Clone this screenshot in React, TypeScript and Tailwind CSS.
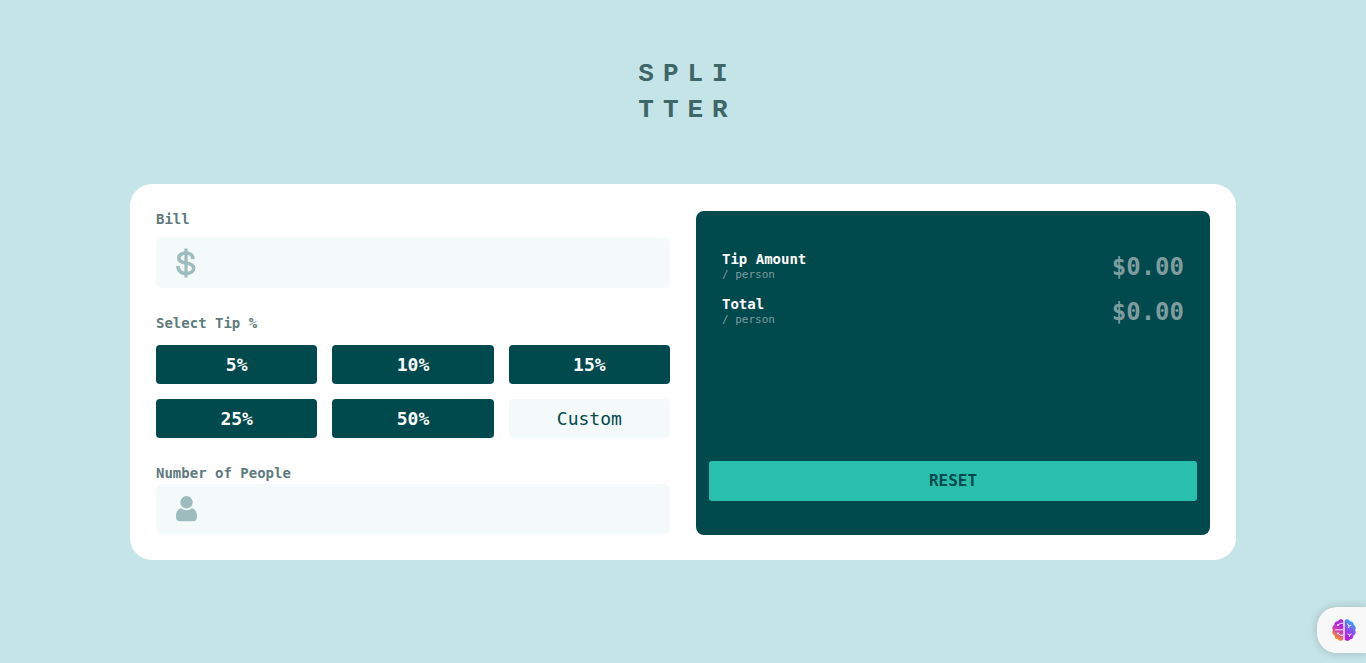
import { useState } from "react";

const TIPS = [5, 10, 15, 25, 50];

function LogoRow({ word }: { word: string }) {
  return (
    <span className="flex gap-[9px]">
      {word.split("").map((letter, i) => (
        <span key={i}>{letter}</span>
      ))}
    </span>
  );
}

function DollarIcon() {
  return (
    <svg width="20" height="30" viewBox="0 0 20 30" fill="none" stroke="#9ebbbd" aria-hidden="true">
      <path d="M10 .5v29" strokeWidth="3.2" />
      <path
        d="M17 11.200C17 7 14.200 5 10 5 5.600 5 2.800 7.200 2.800 10c0 3.200 2.900 4.400 7.200 5 4.700.7 7.700 2 7.700 5.300 0 3.200-3.100 5.200-7.700 5.200-4.700 0-8-2.500-8-7.500"
        strokeWidth="3.600"
      />
    </svg>
  );
}

function PersonIcon() {
  return (
    <svg width="21" height="26" viewBox="0 0 21 26" fill="#9ebbbd" aria-hidden="true">
      <circle cx="10.500" cy="6.300" r="6.200" />
      <path d="M5.200 12.300C1.800 12.900 0 16 0 20.500 0 24 1.500 25.300 4.500 25.300h12c3 0 4.500-1.300 4.500-4.800 0-4.500-1.800-7.600-5.200-8.200-1.500 1.300-3.300 2-5.300 2s-3.800-.7-5.300-2z" />
    </svg>
  );
}

function BrainIcon() {
  return (
    <svg width="24" height="22" viewBox="0 0 24 22" fill="none" aria-hidden="true">
      <defs>
        <linearGradient id="brain-left" x1="2" y1="17" x2="9" y2="7" gradientUnits="userSpaceOnUse">
          <stop stopColor="#f58a32" />
          <stop offset=".55" stopColor="#cf3fb8" />
          <stop offset="1" stopColor="#a929db" />
        </linearGradient>
        <linearGradient id="brain-right" x1="13" y1="17" x2="22" y2="4" gradientUnits="userSpaceOnUse">
          <stop stopColor="#b51be0" />
          <stop offset=".45" stopColor="#8a50ed" />
          <stop offset="1" stopColor="#31a8fa" />
        </linearGradient>
      </defs>
      <path
        fill="url(#brain-left)"
        d="M11.300 1.500v19C9.900 22.400 7 22.300 6 20.200c-2.200.2-3.700-1.400-3.200-3.500C.5 15.800-.4 13.300.9 11.300-.4 9.200.3 6.800 2.300 5.900 2.100 3.500 3.800 2 5.900 2.200 7-.2 10-.5 11.300 1.500z"
      />
      <path
        fill="url(#brain-right)"
        d="M12.700 1.500v19c1.400 1.900 4.300 1.800 5.300-.3 2.200.2 3.700-1.400 3.200-3.500 2.300-.9 3.200-3.400 1.900-5.400 1.300-2.100.6-4.500-1.400-5.400.2-2.400-1.500-3.900-3.600-3.700C17-.2 14-.5 12.700 1.500z"
      />
      <g stroke="#f6e9fc" strokeWidth="1">
        <path d="M11.300 4.200H8.800L6 6M3.300 10.800h8M11.300 16.200H8.500L6 14.300" />
        <path d="M15.500 4.500l1.300 2.700 2.500-1M16.800 7.200v2M15.500 15l2 .8 2-1M17.500 15.800v2" />
      </g>
      <g fill="#f6e9fc">
        <circle cx="6" cy="6" r="1" />
        <circle cx="6" cy="14.500" r="1" />
      </g>
    </svg>
  );
}

function ResultRow({ label, value }: { label: string; value: number }) {
  return (
    <div className="flex items-center justify-between px-[13px]">
      <div className="leading-4">
        <p className="text-sm leading-4 font-bold text-white">{label}</p>
        <p className="text-[11px] leading-4 text-[#7f9c9f]">/ person</p>
      </div>
      <output className="text-2xl leading-8 font-bold text-[#7f9c9f]">${value.toFixed(2)}</output>
    </div>
  );
}

export default function App() {
  const [bill, setBill] = useState("");
  const [people, setPeople] = useState("");
  const [custom, setCustom] = useState("");
  const [tip, setTip] = useState(0);

  const count = Number(people);
  const amount = Number(bill) || 0;
  const rate = (Number(custom) || tip) / 100;
  const tipEach = count > 0 ? (amount * rate) / count : 0;
  const totalEach = count > 0 ? (amount * (1 + rate)) / count : 0;

  const reset = () => {
    setBill("");
    setPeople("");
    setCustom("");
    setTip(0);
  };

  return (
    <div className="min-h-screen bg-[#c5e4e7] px-4 pt-14 pb-10 font-['DejaVu_Sans_Mono','Liberation_Mono',monospace]">
      <h1
        aria-label="Splitter"
        className="flex flex-col items-center font-['Liberation_Mono',monospace] text-[26px] leading-9 font-bold text-[#3d6666]"
      >
        <LogoRow word="SPLI" />
        <LogoRow word="TTER" />
      </h1>

      <main className="mx-auto mt-14 grid max-w-[1106px] gap-[26px] rounded-[22px] bg-white px-[26px] pt-[27px] pb-[25px] md:grid-cols-2">
        <form onSubmit={(e) => e.preventDefault()}>
          <label htmlFor="bill" className="block text-sm leading-4 font-bold text-[#5e7a7d]">
            Bill
          </label>
          <div className="mt-[11px] flex h-[50px] items-center gap-4 rounded-md bg-[#f4fafa] px-5">
            <DollarIcon />
            <input
              id="bill"
              inputMode="decimal"
              value={bill}
              onChange={(e) => setBill(e.target.value)}
              className="h-full min-w-0 flex-1 bg-transparent text-right text-2xl font-bold text-[#00494d] outline-none"
            />
          </div>

          <fieldset className="mt-[27px]">
            <legend className="text-sm leading-4 font-bold text-[#5e7a7d]">Select Tip %</legend>
            <div className="mt-[14px] grid grid-cols-3 gap-[15px]">
              {TIPS.map((t) => (
                <button
                  key={t}
                  type="button"
                  onClick={() => setTip(t)}
                  className="h-[39px] rounded bg-[#00494d] text-lg font-bold text-white hover:bg-[#26c0ab]"
                >
                  {t}%
                </button>
              ))}
              <input
                aria-label="Custom tip"
                placeholder="Custom"
                value={custom}
                onChange={(e) => setCustom(e.target.value)}
                className="h-[39px] w-full min-w-0 rounded bg-[#f4fafa] text-center text-lg text-[#00494d] outline-none placeholder:text-[#00494d]"
              />
            </div>
          </fieldset>

          <label htmlFor="people" className="mt-[27px] block text-sm leading-4 font-bold text-[#5e7a7d]">
            Number of People
          </label>
          <div className="mt-[3px] flex h-[50px] items-center gap-4 rounded-md bg-[#f4fafa] px-5">
            <PersonIcon />
            <input
              id="people"
              inputMode="numeric"
              value={people}
              onChange={(e) => setPeople(e.target.value)}
              className="h-full min-w-0 flex-1 bg-transparent text-right text-2xl font-bold text-[#00494d] outline-none"
            />
          </div>
        </form>

        <section className="flex min-h-[324px] flex-col gap-[13px] rounded-lg bg-[#00494d] px-[13px] pt-10 pb-[34px]">
          <ResultRow label="Tip Amount" value={tipEach} />
          <ResultRow label="Total" value={totalEach} />
          <button
            type="button"
            onClick={reset}
            className="mt-auto h-10 rounded-[3px] bg-[#28c0ad] text-base font-bold text-[#00494d]"
          >
            RESET
          </button>
        </section>
      </main>

      <button
        type="button"
        aria-label="Open assistant"
        className="fixed right-0 bottom-[10px] flex h-[46px] w-[49px] items-center rounded-l-[20px] bg-[#f8f8f8] pl-[15px] shadow-[0_0_8px_rgba(0,0,0,0.2)]"
      >
        <BrainIcon />
      </button>
    </div>
  );
}
